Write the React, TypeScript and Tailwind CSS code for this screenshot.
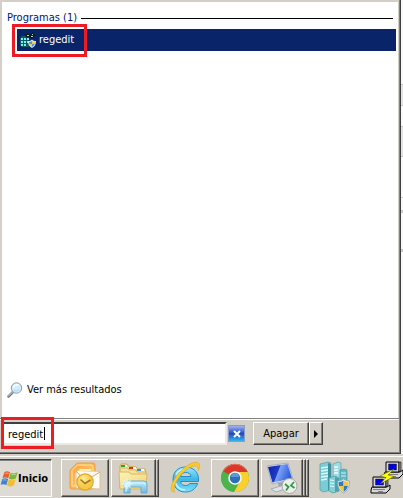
import { useState } from 'react'
import type { ReactNode } from 'react'

const raised = 'bg-[#d4d0c8] border border-t-white border-l-white border-r-[#404040] border-b-[#404040] shadow-[inset_-1px_-1px_0_#808080]'

function RegeditIcon() {
    return (
        <svg width="16" height="16" viewBox="0 0 16 16" aria-hidden="true">
            <path d="M0 6l2-2h7v11H2l-2-2z" fill="#0d5a60" />
            <path d="M1 6h2v2H1zM4 6h2v2H4zM7 6h2v2H7zM1 9h2v2H1zM4 9h2v2H4zM7 9h2v2H7zM1 12h2v2H1zM4 12h2v2H4z" fill="#7df0ea" />
            <path d="M5 3l3-2 2 2 3-3 2 3-3 4-3-2-2 1z" fill="#0a1a1c" />
            <path d="M7 3h2v1H7zM12 2h1v1h-1zM11 4h2v1h-2z" fill="#b8d9cf" />
            <path d="M8 9c1.500 0 3-.5 4-1.500C13 8.500 14.500 9 16 9c0 3.500-1 5.500-4 7-3-1.500-4-3.500-4-7z" fill="#d9e4ef" />
            <path d="M9 10q2 0 3-1v3H9.300zM12 12h2.800q-.8 2-2.800 3z" fill="#4f94de" />
            <path d="M12 9q1 1 3 1l-.2 2H12zM9.300 12H12v3q-2-1-2.700-3z" fill="#f8cc48" />
        </svg>
    )
}

function SearchIcon() {
    return (
        <svg width="16" height="16" viewBox="0 0 16 16" aria-hidden="true">
            <path d="M6 10l-4.500 4.500" stroke="#777b80" strokeWidth="2.500" strokeLinecap="round" />
            <path d="M5.500 10l-4 4" stroke="#d6d8dc" strokeWidth="1" strokeLinecap="round" />
            <circle cx="9.500" cy="6" r="5.200" fill="#d5ecfa" stroke="#899fb3" />
            <path d="M6.500 6a3.500 3.500 0 0 1 5-3" stroke="#fff" strokeWidth="1.500" fill="none" />
            <path d="M7 8a3 3 0 0 0 5-1" stroke="#a8d4f2" fill="none" />
        </svg>
    )
}

function WindowsFlag() {
    return (
        <svg width="18" height="18" viewBox="0 0 18 18" aria-hidden="true">
            <path d="M4.500 2C6 1 8 1 10 2.300L8.300 8.300C6.500 7.200 4.500 7.200 2.500 8z" fill="#e8602c" />
            <path d="M10.600 2.700c2.300 1 4.300 1 7-.4l-1.800 6.200c-2.600 1.200-4.600 1.200-6.900.2z" fill="#7eb83a" />
            <path d="M2.300 8.900C4.300 8 6.200 8 8.100 9.100l-1.700 6c-2-1.200-3.800-1.200-5.700-.4z" fill="#3c82cc" />
            <path d="M8.700 9.500c2.300 1 4.300 1 6.900-.1l-1.800 6.200c-2.400 1.200-4.500 1.200-6.800 0z" fill="#f4bd31" />
            <path d="M5.200 3.500q1.800-1 3.500 0M3 10.200q1.800-.8 3.500 0M11.300 4.300q2 .8 4.500 0" stroke="#fff" strokeOpacity=".45" fill="none" />
        </svg>
    )
}

function OutlookIcon() {
    return (
        <svg width="32" height="32" viewBox="0 0 32 32" aria-hidden="true">
            <defs>
                <linearGradient id="ol" x1="0" y1="0" x2="1" y2="1">
                    <stop offset="0" stopColor="#f7a53c" />
                    <stop offset="1" stopColor="#ffd56c" />
                </linearGradient>
                <radialGradient id="clock" cx=".4" cy=".3">
                    <stop offset="0" stopColor="#ffeb94" />
                    <stop offset="1" stopColor="#f7c845" />
                </radialGradient>
            </defs>
            <path d="M8 1h16q2 0 2 2v22q0 2-2 2H3q-2 0-2-2V8z" fill="#fbb454" stroke="#f0a03c" />
            <path d="M8.500 3H22q2 0 2 2v19H3V8.500z" fill="url(#ol)" stroke="#ffe3ac" />
            <path d="M11 7h11v3H9v14H6V12z" fill="#fff0c9" />
            <path d="M7 9l24 1v17l-24-1z" fill="#fffdf8" stroke="#e2bd8a" />
            <path d="M7 9l9 10 15-9" fill="#fffaf0" stroke="#dca764" />
            <circle cx="16" cy="20" r="8.200" fill="url(#clock)" stroke="#dfa52e" strokeWidth="1.200" />
            <path d="M11.500 17.500l4.500 4 5.500-3.500" fill="none" stroke="#a3761c" strokeWidth="1.600" />
        </svg>
    )
}

function ExplorerIcon() {
    return (
        <svg width="34" height="34" viewBox="0 0 34 34" aria-hidden="true">
            <defs>
                <linearGradient id="folder" x1="0" y1="0" x2="1" y2="1">
                    <stop offset="0" stopColor="#fff3b4" />
                    <stop offset="1" stopColor="#efd27a" />
                </linearGradient>
                <linearGradient id="stand" x1="0" y1="0" x2="0" y2="1">
                    <stop offset="0" stopColor="#c3ecfb" />
                    <stop offset="1" stopColor="#6fb7dd" />
                </linearGradient>
            </defs>
            <path d="M3 27V5l1-2h6l1 2 8 1 2 2h7l1 3v16z" fill="#f5e29b" stroke="#cfa950" />
            <path d="M4 4h4v2H4z" fill="#27a444" />
            <path d="M8 4h2v2H8zM16 6h3v2h-3zM24 8h3v2h-3z" fill="#fff" />
            <path d="M12 6h4v2h-4z" fill="#d9361c" />
            <path d="M20 8h4v2h-4z" fill="#3c8fdb" />
            <path d="M4 7h7l1 2h7l1 2h9" fill="none" stroke="#d7b865" />
            <path d="M2 11h10l2 2h16l-1 15H3z" fill="url(#folder)" stroke="#d8b763" />
            <path d="M7 32V23q0-3 3-3h17q3 0 3 3v9h-6v-6H13v6z" fill="url(#stand)" stroke="#69aed2" />
            <path d="M9 31v-7q0-2 2-2h15q2 0 2 2" fill="none" stroke="#e1f7ff" />
            <path d="M10 16l1 4 3-1-1 3 4 1-4 1 1 3-3-1-1 4-1-4-3 1 1-3-4-1 4-1-1-3 3 1z" fill="#e6fbff" fillOpacity=".75" />
        </svg>
    )
}

function IeIcon() {
    return (
        <svg width="32" height="34" viewBox="0 0 32 34" aria-hidden="true">
            <defs>
                <linearGradient id="ie" x1="0" y1="0" x2="0" y2="1">
                    <stop offset="0" stopColor="#9be8fb" />
                    <stop offset=".5" stopColor="#3bb7e8" />
                    <stop offset="1" stopColor="#7fe2f8" />
                </linearGradient>
            </defs>
            <path
                fillRule="evenodd"
                d="M29.500 20.500H11.500c.6 3 2.500 4 5 4 2 0 3.300-.6 4.200-2h8C26.500 28 22.500 31 16.500 31 9 31 4 26 4 18.500S9 6 16.500 6s13 5 13 12zM11.500 15.500H22c-.5-2.600-2.500-4-5.200-4s-4.700 1.400-5.300 4z"
                fill="url(#ie)"
                stroke="#2190ca"
            />
            <path d="M7 14C9 9.500 13 8 17 8M6.500 22c2 5 5 7 9.500 7" fill="none" stroke="#cdf6ff" strokeWidth="1.500" />
            <path d="M6 31C1 32 1 26 5 19 11 8 23 0 28.500 1.500c3 1 2.300 4.500.8 8 0-3-.5-4.800-3-4.700C20.500 5 12 12 7.500 20 5 25 4 29 6 31z" fill="#fccb28" stroke="#e3a51c" strokeWidth=".6" />
        </svg>
    )
}

function ChromeIcon() {
    return (
        <svg width="30" height="30" viewBox="0 0 30 30" aria-hidden="true">
            <circle cx="15" cy="15" r="14" fill="#4db34b" />
            <path d="M15 15L2.900 8A14 14 0 0 1 27.600 9H15z" fill="#d9382c" />
            <path d="M15 9h12.600A14 14 0 0 1 14 29l6.200-11z" fill="#fbcf2c" />
            <path d="M3 8l6.800 10 5.200 3-1 8A14 14 0 0 1 3 8z" fill="#4db34b" />
            <path d="M3.500 7.500A14 14 0 0 1 26.500 7" fill="none" stroke="#f0705f" />
            <circle cx="15" cy="15" r="6.800" fill="#f6f7f7" />
            <circle cx="15" cy="15" r="5.200" fill="#2c6fb8" />
            <path d="M11 14a4 4 0 0 1 8 0" fill="#5b98d4" />
        </svg>
    )
}

function RemoteDesktopIcon() {
    return (
        <svg width="34" height="34" viewBox="0 0 34 34" aria-hidden="true">
            <defs>
                <linearGradient id="screen" x1="0" y1="0" x2="1" y2=".3">
                    <stop offset="0" stopColor="#0c1f9c" />
                    <stop offset=".48" stopColor="#1e3ccf" />
                    <stop offset=".52" stopColor="#7ea3f2" />
                    <stop offset="1" stopColor="#2f5fe0" />
                </linearGradient>
            </defs>
            <path d="M2 5l21-3 5 16-21 5z" fill="#dfe6f0" stroke="#a4b0c2" />
            <path d="M3 6l19.500-3 4.500 14.500-19.500 4z" fill="url(#screen)" />
            <path d="M13 22l6-1 1 5h-6z" fill="#98a3b2" />
            <path d="M6 28l13-4 4 3-12 4z" fill="#dfe4ea" stroke="#a5adb8" />
            <circle cx="24.500" cy="25" r="7.500" fill="#eeeeec" stroke="#a8a8a8" />
            <path d="M20 23l3.500 3-2.500 3.500M29 21l-3 3.500 3.500 2.500" fill="none" stroke="#339a45" strokeWidth="1.800" />
        </svg>
    )
}

function ServerIcon() {
    return (
        <svg width="34" height="34" viewBox="0 0 34 34" aria-hidden="true">
            <path d="M2 3l8-2 3 1v27l-8 2-3-2z" fill="#7acdd5" stroke="#5f9ea8" strokeWidth=".8" />
            <path d="M3 7l7-1M3 10l7-1M3 13l7-1M3 16l7-1M3 19l6-1" stroke="#dcfbff" strokeWidth="1.500" />
            <path d="M10 2l3 1v25l-3 1z" fill="#3a909d" />
            <path d="M15 3l5-2 3 1v22l-4 3-4-2z" fill="#9fdbe0" stroke="#6aa4ad" strokeWidth=".8" />
            <path d="M16 6h4M16 9h4M16 12h4" stroke="#eaffff" strokeWidth="1.500" />
            <path d="M22 9l4-1 3 1v14l-4 3-3-2z" fill="#63b8c3" stroke="#5598a3" strokeWidth=".8" />
            <path d="M23 12h5M23 15h5" stroke="#c9f4f7" />
            <path d="M11 17l6-2 4 2v13l-6 2-4-2z" fill="#84d0d8" stroke="#4f9eaa" strokeWidth=".8" />
            <path d="M12 19l4 .5M12 22l4 .5M12 25l4 .5" stroke="#dfffff" />
            <path d="M17 16l4 1v13l-4 1z" fill="#4ca3ae" />
            <path d="M25.500 18c2 1.500 4 2 6 2 0 6-2 10-6 12-4-2-6-6-6-12 2 0 4-.5 6-2z" fill="#e8edf1" stroke="#91a2ae" strokeWidth=".8" />
            <path d="M25.500 19.500V25H21l-.5-4q3 0 5-1.500zM25.500 25H30q-1 4-4.500 6z" fill="#2e7bc9" />
            <path d="M25.500 19.500q2 1.500 5 1.500l-.5 4h-4.500zM21 25h4.500v6Q22 29 21 25z" fill="#f6c935" />
        </svg>
    )
}

function PuttyComputer() {
    return (
        <>
            <path d="M-1 11h15l3-2v4l-4 4H-2v-3z" fill="#d6d6d6" stroke="#000" />
            <path d="M0 13.500h12M5 15.500h5" stroke="#808080" />
            <path d="M0 1h13v10H0z" fill="#d8d8d8" stroke="#000" />
            <path d="M13 1v10l2-2V1z" fill="#909090" stroke="#000" strokeWidth=".6" />
            <path d="M2.500 3h8v6h-8z" fill="#0000e0" stroke="#222" strokeWidth=".5" />
        </>
    )
}

function PuttyIcon() {
    return (
        <svg width="36" height="34" viewBox="0 0 36 34" aria-hidden="true">
            <g transform="translate(19 0)">
                <PuttyComputer />
            </g>
            <g transform="translate(6 15)">
                <PuttyComputer />
            </g>
            <path d="M27 8L13 15l6 1.500L13 23l14-7.500-6-1.500z" fill="#ffff00" stroke="#55550a" strokeWidth=".5" />
        </svg>
    )
}

function TaskButton({ label, className, children }: { label: string; className?: string; children: ReactNode }) {
    return (
        <button aria-label={label} title={label} className={`flex h-[38px] shrink-0 items-center justify-center ${className ?? ''}`}>
            {children}
        </button>
    )
}

function StackEdge() {
    return <span className={`h-[38px] w-[3px] shrink-0 border-l-0 ${raised}`} />
}

export default function App() {
    const [query, setQuery] = useState('regedit')

    return (
        <div className="flex h-screen flex-col overflow-hidden bg-[#d4d0c8] font-['DejaVu_Sans_Condensed','DejaVu_Sans',sans-serif] text-[11px] text-black">
            <div className="flex min-h-0 flex-1 bg-[#fafafa]">
                <main className="flex min-w-0 flex-1 flex-col border-r border-b border-[#404040]">
                    <div className="flex min-h-0 flex-1 flex-col border-r border-b border-[#808080]">
                        <section className="flex min-h-0 flex-1 flex-col border-t-2 border-r border-l-2 border-[#d4d0c8] bg-white">
                            <div className="mt-2 mr-[5px] ml-[5px] flex h-4 items-center gap-1">
                                <h2 className="text-[#00156e]">Programas (1)</h2>
                                <span className="h-px flex-1 bg-black" />
                            </div>
                            <a href="#regedit" className="relative mt-[3px] mr-[2px] ml-[15px] flex h-[22px] items-center gap-[3px] bg-[#0a246a] pl-[3px] text-white">
                                <RegeditIcon />
                                regedit
                                <span className="pointer-events-none absolute -top-[5px] -left-[5px] h-[33px] w-[75px] border-[3px] border-[#ed1c24]" />
                            </a>
                            <a href="#resultados" className="mt-auto mb-[18px] ml-[5px] flex h-5 items-center gap-1">
                                <SearchIcon />
                                Ver más resultados
                            </a>
                        </section>
                        <footer className="flex h-[34px] shrink-0 items-start border-t border-[#808080] bg-[#d4d0c8] pt-[3px] shadow-[inset_0_1px_0_white]">
                            <div className="relative ml-[2px] w-[225px]">
                                <input
                                    aria-label="Buscar programas y archivos"
                                    value={query}
                                    onChange={(e) => setQuery(e.target.value)}
                                    className="block h-[23px] w-full border-2 border-t-[#404040] border-r-[#ece9e4] border-b-[#ece9e4] border-l-[#404040] bg-white pt-px pl-1 outline-none"
                                />
                                <span className="pointer-events-none absolute top-[5px] left-[42px] h-[13px] w-px bg-black" />
                                <span className="pointer-events-none absolute -top-[5px] -left-px h-8 w-[53px] border-[3px] border-[#ed1c24]" />
                            </div>
                            <button aria-label="Borrar" onClick={() => setQuery('')} className="mt-[3px] ml-px flex h-[17px] w-[17px] items-center justify-center border border-[#8b9bc7] bg-linear-to-b from-[#a3b4f0] via-[#2348bd] to-[#34b4ee]">
                                <svg width="8" height="8" viewBox="0 0 8 8" aria-hidden="true">
                                    <path d="M1 1l6 6M7 1L1 7" stroke="#fff" strokeWidth="2" />
                                </svg>
                            </button>
                            <div className="ml-2 flex">
                                <button className={`h-[23px] w-14 pt-px ${raised}`}>Apagar</button>
                                <button aria-label="Más opciones de apagado" className={`flex h-[23px] w-[14px] items-center justify-center ${raised}`}>
                                    <svg width="4" height="8" viewBox="0 0 4 8" aria-hidden="true">
                                        <path d="M0 0l4 4-4 4z" />
                                    </svg>
                                </button>
                            </div>
                        </footer>
                    </div>
                </main>
                <aside className="flex w-[2px] flex-col">
                    <span className="mt-[84px] h-[22px] border-y border-[#c4c4c4] bg-[#e4e4e4]" />
                    <span className="mt-5 h-[31px] border-y border-[#c4c4c4] bg-[#e4e4e4]" />
                    <span className="mt-10 h-px bg-[#cccccc]" />
                    <span className="mt-3 h-[3px] bg-[#cccccc]" />
                    <span className="mt-9 h-[3px] bg-[#cccccc]" />
                </aside>
            </div>

            <nav className="flex h-11 shrink-0 items-start border-t-2 border-[#d4d0c8] pt-[3px] shadow-[inset_0_1px_0_white]">
                <button className="flex h-[38px] w-[52px] shrink-0 items-center border border-l-0 border-t-[#404040] border-r-white border-b-white bg-[#dedbd5] pt-[2px] font-bold shadow-[inset_0_1px_0_#808080]">
                    <WindowsFlag />
                    Inicio
                </button>
                <TaskButton label="Outlook" className={`ml-[9px] w-12 ${raised}`}>
                    <OutlookIcon />
                </TaskButton>
                <TaskButton label="Explorador de Windows" className={`ml-[2px] w-[45px] ${raised}`}>
                    <ExplorerIcon />
                </TaskButton>
                <StackEdge />
                <TaskButton label="Internet Explorer" className="ml-[2px] w-12">
                    <IeIcon />
                </TaskButton>
                <TaskButton label="Google Chrome" className={`ml-[2px] w-12 ${raised}`}>
                    <ChromeIcon />
                </TaskButton>
                <TaskButton label="Escritorio remoto" className={`ml-[2px] w-[42px] ${raised}`}>
                    <RemoteDesktopIcon />
                </TaskButton>
                <StackEdge />
                <StackEdge />
                <TaskButton label="Administrador del servidor" className="ml-[2px] w-12">
                    <ServerIcon />
                </TaskButton>
                <TaskButton label="PuTTY" className="ml-[2px] w-12">
                    <PuttyIcon />
                </TaskButton>
            </nav>
        </div>
    )
}
